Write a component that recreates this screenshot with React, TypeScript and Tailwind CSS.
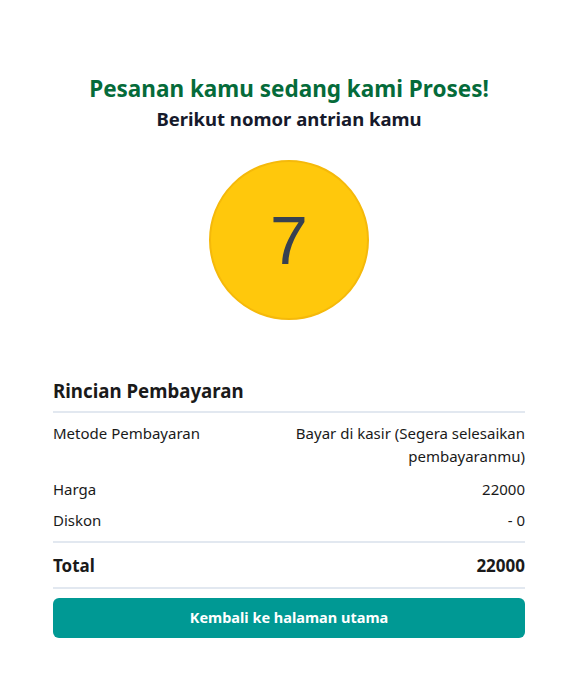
const App = () => {
  return (
    <div className="min-h-screen bg-white pt-[73px] font-['Noto_Sans','Open_Sans',sans-serif] text-[#1a1a1a]">
      <div className="ml-[53px] w-[472px]">
        <div className="text-center">
          <h1 className="text-[22.5px] leading-[32px] font-bold text-[#056b3a]">Pesanan kamu sedang kami Proses!</h1>
          <h2 className="text-[18.5px] leading-[28px] font-bold text-[#161a2b]">Berikut nomor antrian kamu</h2>
        </div>
        <div className="mt-[27px] flex justify-center">
          <div className="w-[160px] h-[160px] rounded-full bg-[#ffc80c] border-2 border-[#f5b90a] flex items-center justify-center">
            <span className="text-[68px] leading-none text-[#374151] font-['Liberation_Sans',sans-serif]">7</span>
          </div>
        </div>
        <div className="mt-[57px]">
          <h3 className="text-[18.7px] leading-[28px] font-bold pb-[6px] border-b-2 border-[#e2e8f0]">Rincian Pembayaran</h3>
          <div className="text-[15px] leading-[23px] pt-[9px] pb-[9px] border-b-2 border-[#e2e8f0] flex flex-col gap-[8px]">
            <div className="flex justify-between mb-[2px]">
              <span>Metode Pembayaran</span>
              <span className="w-1/2 text-right">Bayar di kasir (Segera selesaikan pembayaranmu)</span>
            </div>
            <div className="flex justify-between">
              <span>Harga</span>
              <span>22000</span>
            </div>
            <div className="flex justify-between">
              <span>Diskon</span>
              <span>- 0</span>
            </div>
          </div>
          <div className="flex justify-between text-[17px] leading-[24px] font-bold pt-[11px] pb-[9px] border-b-2 border-[#e2e8f0]">
            <span>Total</span>
            <span>22000</span>
          </div>
          <button className="mt-[9px] w-full h-[40px] rounded-md bg-[#009994] text-white text-[14.5px] font-bold">Kembali ke halaman utama</button>
        </div>
      </div>
    </div>
  )
}

export default App
